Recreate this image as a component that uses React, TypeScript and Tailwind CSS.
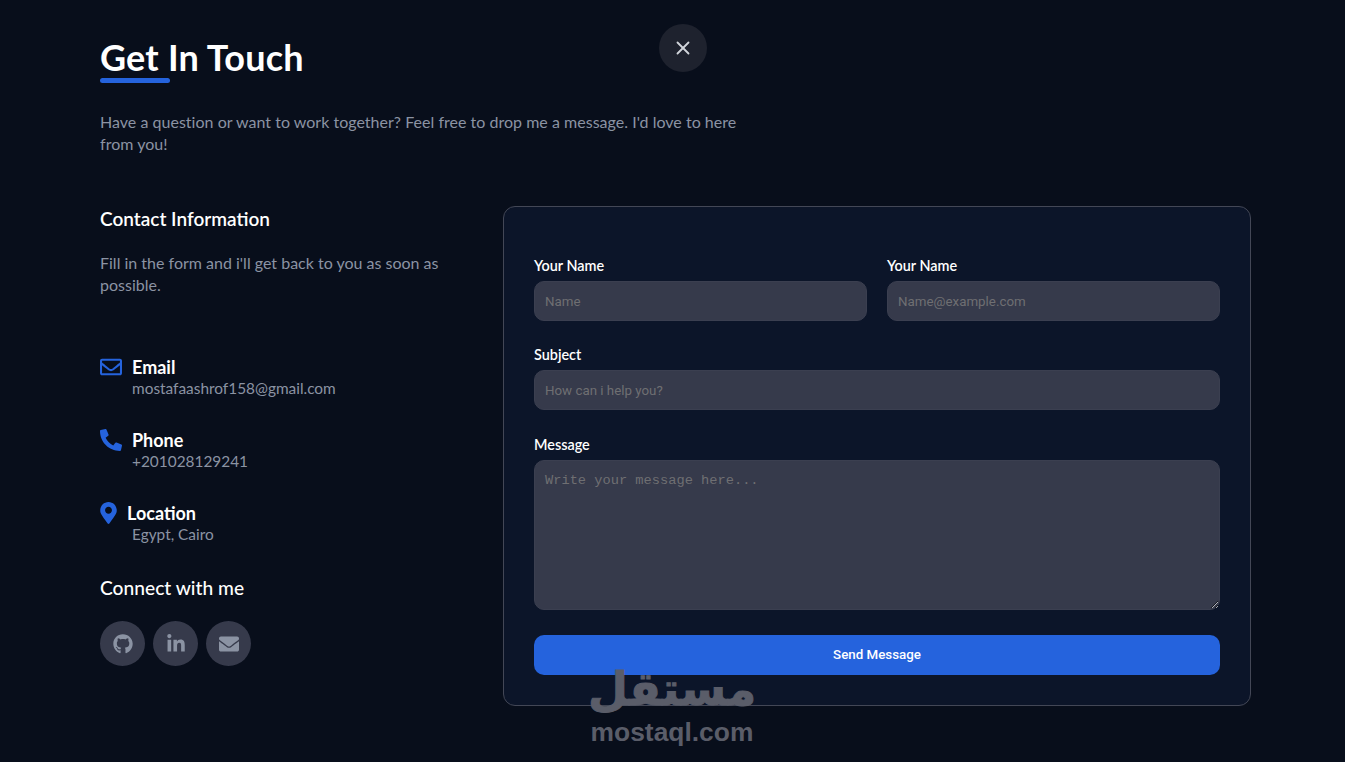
import { FaEnvelope, FaGithub, FaLinkedinIn, FaMapMarkerAlt, FaPhoneAlt, FaRegEnvelope } from "react-icons/fa"
import { X } from "lucide-react"

const contactItems = [
  { title: "Email", value: "mostafaashrof158@gmail.com", icon: <FaRegEnvelope size={22} /> },
  { title: "Phone", value: "+201028129241", icon: <FaPhoneAlt size={22} /> },
  { title: "Location", value: "Egypt, Cairo", icon: <FaMapMarkerAlt size={22} className="w-[17px]" /> },
]

const inputClass =
  "h-10 w-full rounded-[10px] border border-[#3b3f50] bg-[#363a4b] px-[10px] font-['Roboto',sans-serif] text-[13.33px] text-white outline-none placeholder:text-[#6f6f72]"

function Label({ children }: { children: string }) {
  return <label className="mb-[5px] block h-5 text-[14.4px] font-semibold leading-5 text-white">{children}</label>
}

export default function App() {
  return (
    <div className="relative min-h-[762px] overflow-hidden bg-[#080e1b] pl-[100px] pt-9 font-['Lato',sans-serif]">
      <button className="absolute left-[659px] top-6 flex h-12 w-12 items-center justify-center rounded-full bg-[#1e222e] text-[#d1d5db]">
        <X size={22} />
      </button>

      <h1 className="relative w-fit pb-[5px] text-4xl font-bold leading-[42px] tracking-[0.2px] text-white">
        Get In Touch
        <span className="absolute bottom-0 left-0 h-[5px] w-[70px] rounded-full bg-[#2563dd]" />
      </h1>
      <p className="mt-7 w-[660px] text-base leading-[22px] tracking-[0.02px] text-[#8b93a3]">
        Have a question or want to work together? Feel free to drop me a message. I'd love to here from you!
      </p>

      <div className="mt-[51px] flex">
        <div className="w-[403px] shrink-0 pt-px">
          <h2 className="text-[19px] font-semibold leading-6 text-white">Contact Information</h2>
          <p className="mt-[21px] w-[360px] text-base leading-[22px] text-[#8b93a3]">
            Fill in the form and i'll get back to you as soon as possible.
          </p>

          <div className="mt-[60px] flex flex-col gap-[30px]">
            {contactItems.map((item) => (
              <div key={item.title}>
                <div className="flex h-[22px] items-center gap-[10px]">
                  <span className="text-[#2563dd]">{item.icon}</span>
                  <span className="text-lg font-bold leading-[22px] text-white">{item.title}</span>
                </div>
                <p className="pl-8 text-[15.4px] leading-[21px] text-[#8b93a3]">{item.value}</p>
              </div>
            ))}
          </div>

          <h2 className="mt-[31px] text-[19.2px] font-medium leading-6 text-white">Connect with me</h2>
          <div className="mt-[21px] flex gap-2">
            <a className="flex h-[45px] w-[45px] items-center justify-center rounded-full bg-[#363a4b] text-[#8b93a3]">
              <FaGithub size={20} />
            </a>
            <a className="flex h-[45px] w-[45px] items-center justify-center rounded-full bg-[#363a4b] text-[#8b93a3]">
              <FaLinkedinIn size={20} />
            </a>
            <a className="flex h-[45px] w-[45px] items-center justify-center rounded-full bg-[#363a4b] text-[#8b93a3]">
              <FaEnvelope size={20} />
            </a>
          </div>
        </div>

        <form className="h-[500px] w-[748px] shrink-0 rounded-xl border border-[#434756] bg-[#0c1529] px-[30px] pt-[49px]">
          <div className="grid grid-cols-2 gap-5">
            <div>
              <Label>Your Name</Label>
              <input className={inputClass} placeholder="Name" />
            </div>
            <div>
              <Label>Your Name</Label>
              <input className={inputClass} placeholder="Name@example.com" />
            </div>
          </div>
          <div className="mt-6">
            <Label>Subject</Label>
            <input className={inputClass} placeholder="How can i help you?" />
          </div>
          <div className="mt-[25px]">
            <Label>Message</Label>
            <textarea
              className="block h-[150px] w-full rounded-[10px] border border-[#3b3f50] bg-[#363a4b] p-[10px] font-['Liberation_Mono',monospace] text-[13.7px] text-white outline-none placeholder:text-[#6f6f72]"
              placeholder="Write your message here..."
            />
          </div>
          <button
            type="button"
            className="mt-[25px] h-10 w-full rounded-[10px] bg-[#2563dd] font-['Roboto',sans-serif] text-[13.33px] font-medium text-white"
          >
            Send Message
          </button>
        </form>
      </div>

      {/* mostaql watermark */}
      <div className="absolute left-[591px] top-[665px] flex w-[162px] flex-col items-center text-[#5a5d69]">
        <span
          className="mb-[6px] h-[49px] font-['DejaVu_Sans',sans-serif] text-[46px] font-bold leading-[49px] [-webkit-text-stroke:1px_#5a5d69]"
          dir="rtl"
        >
          مستقل
        </span>
        <span className="font-['Liberation_Sans',sans-serif] text-[26.4px] font-bold leading-6">mostaql.com</span>
      </div>
    </div>
  )
}
